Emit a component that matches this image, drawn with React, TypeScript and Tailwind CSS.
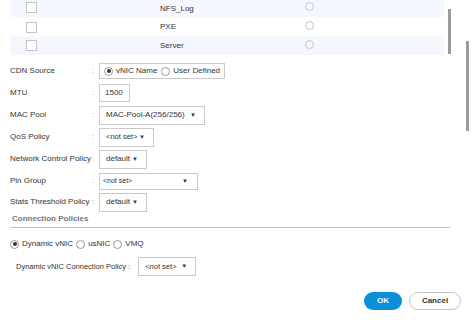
import React from "react";

const rows = [
    { name: "NFS_Log", shade: true, h: "h-[17px]", box: "mt-[2px]", radio: "mt-[2px]" },
    { name: "PXE", shade: false, h: "h-[19px]", box: "mt-[5px]", radio: "mt-[4px]" },
    { name: "Server", shade: true, h: "h-[19px]", box: "mt-[4px]", radio: "mt-[4px]" },
];

function Radio({ on }: { on?: boolean }) {
    return (
        <span className="inline-flex items-center justify-center w-[9px] h-[9px] rounded-full border border-[#9a9a9a] bg-white shrink-0">
            {on && <span className="w-[4px] h-[4px] rounded-full bg-[#333]" />}
        </span>
    );
}

function Select({ value, w, small }: { value: string; w: string; small?: boolean }) {
    return (
        <div className={`flex items-center justify-between border border-[#c9c9c9] bg-white pl-[6px] pr-[8px] shrink-0 h-[19px] ${w}`}>
            <span className={`${small ? "text-[7.5px]" : "text-[8px]"} text-[#333] whitespace-nowrap`}>{value}</span>
            <span className="text-[6px] text-[#1d3b6b]">▼</span>
        </div>
    );
}

function Field({ label, children }: { label: string; children: React.ReactNode }) {
    return (
        <div className="flex items-center h-[22px]">
            <span className="w-[82px] text-[8px] text-[#333] whitespace-nowrap">{label}</span>
            <span className="w-[7px] text-[8px] text-[#999]">:</span>
            {children}
        </div>
    );
}

export default function App() {
    return (
        <div className="relative w-[476px] h-[322px] bg-white overflow-hidden" style={{ fontFamily: '"Liberation Sans", Arial, sans-serif' }}>
            {/* vNIC table */}
            <div className="flex flex-col ml-[10px] w-[434px]">
                {rows.map((r) => (
                    <div key={r.name} className={`flex ${r.h} ${r.shade ? "bg-[#f4f8fe]" : "bg-white"}`}>
                        <span className={`ml-[16px] w-[11px] h-[11px] border border-[#c4c4c4] bg-white ${r.box}`} />
                        <span className="ml-[123px] w-[145px] self-center text-[8px] text-[#333]">{r.name}</span>
                        <span className={`w-[9px] h-[9px] rounded-full border border-[#c4c4c4] ${r.radio}`} />
                    </div>
                ))}
            </div>

            {/* scrollbars */}
            <div className="absolute left-[448px] top-[9px] w-[3px] h-[45px] bg-[#9c9c9c]" />
            <div className="absolute left-[466px] top-[41px] w-[3px] h-[90px] bg-[#9c9c9c]" />

            {/* form */}
            <div className="flex flex-col ml-[10px] mt-[5px]">
                <Field label="CDN Source">
                    <div className="flex items-center gap-[3px] h-[16px] border border-[#c9c9c9] px-[4px] text-[8px] text-[#333] whitespace-nowrap">
                        <Radio on />
                        <span>vNIC Name</span>
                        <span className="ml-[1px] flex"><Radio /></span>
                        <span>User Defined</span>
                    </div>
                </Field>
                <Field label="MTU">
                    <div className="flex items-center w-[31px] h-[18px] border border-[#c9c9c9] pl-[5px] text-[8px] text-[#333]">1500</div>
                </Field>
                <Field label="MAC Pool">
                    <Select value="MAC-Pool-A(256/256)" w="w-[106px]" />
                </Field>
                <Field label="QoS Policy">
                    <Select value="<not set>" w="w-[55px]" small />
                </Field>
                <Field label="Network Control Policy">
                    <Select value="default" w="w-[48px]" />
                </Field>
                <Field label="Pin Group">
                    <div className="flex items-center justify-between border border-[#c9c9c9] bg-white pl-[3px] pr-[9px] w-[99px] h-[17px]">
                        <span className="text-[7px] text-[#333] whitespace-nowrap">&lt;not set&gt;</span>
                        <span className="text-[6px] text-[#333]">▼</span>
                    </div>
                </Field>
                <div className="-mt-[1px]">
                    <Field label="Stats Threshold Policy">
                        <Select value="default" w="w-[48px]" />
                    </Field>
                </div>
            </div>

            <div className="ml-[12px] mt-[0px] text-[8px] font-bold text-[#777]">Connection Policies</div>
            <div className="ml-[10px] mt-[2px] w-[440px] h-px bg-[#c4c4c4]" />

            <div className="flex items-center gap-[3px] ml-[10px] mt-[10px] text-[8px] text-[#333]">
                <Radio on />
                <span>Dynamic vNIC</span>
                <Radio />
                <span>usNIC</span>
                <Radio />
                <span>VMQ</span>
            </div>

            <div className="flex items-center gap-[8px] ml-[16px] mt-[7px]">
                <span className="text-[7.5px] text-[#333] whitespace-nowrap">Dynamic vNIC Connection Policy :</span>
                <Select value="<not set>" w="w-[58px]" small />
            </div>

            {/* buttons */}
            <div className="flex justify-end gap-[7px] mr-[15px] mt-[16px]">
                <button className="w-[38px] h-[18px] rounded-full bg-[#0b8fd8] text-white text-[8px] font-bold">OK</button>
                <button className="w-[52px] h-[18px] rounded-full border border-[#c4c4c4] bg-white text-[#333] text-[8px] font-bold">Cancel</button>
            </div>
        </div>
    );
}
